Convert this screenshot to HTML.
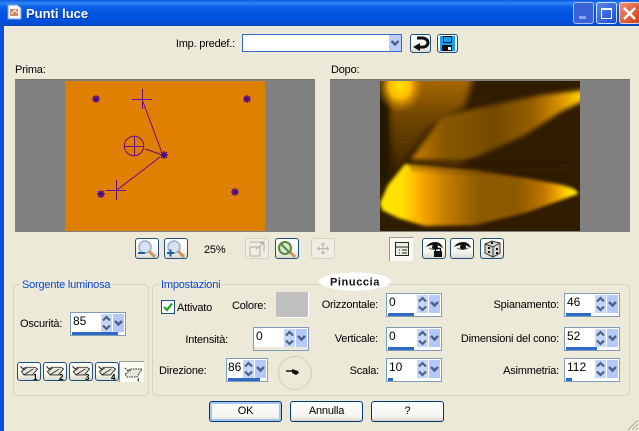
<!DOCTYPE html>
<html><head><meta charset="utf-8"><style>
html,body{margin:0;padding:0}
body{width:639px;height:431px;overflow:hidden;position:relative;background:#ece9d8;font:11px "Liberation Sans",sans-serif;letter-spacing:-.2px;color:#000}
.a,.t,.sp,.b,.ib,svg.a{position:absolute}
.t{white-space:nowrap;line-height:14px}
.r{text-align:right}
.g{position:absolute;border:1px solid #d6d3c4;border-radius:5px}
.gt{position:absolute;background:#ece9d8;color:#0a46d8;padding:0 2px;line-height:14px;white-space:nowrap;font-size:11px}
.sp{width:54px;height:22px;background:#fff;border:1px solid #7f9db9}
.sp span{position:absolute;left:2px;top:1px;font-size:12px;line-height:15px;letter-spacing:0}
.sp i{position:absolute;left:1px;bottom:0;height:3px;background:#316ac5}
.sp .tr{position:absolute;left:0;right:0;bottom:0;height:3px;background:#ece9d8}
.sp svg{position:absolute;right:1px;top:1px}
.ib{width:22px;height:19px;border:1px solid #1c5180;border-radius:3px;background:linear-gradient(#fff,#f4f2e8 70%,#dcd9cc)}
.ib.d{border-color:#d4d1c2;background:#f0eee2}
.ib svg{position:absolute;left:0;top:0}
.b{height:19px;border:1px solid #003c74;border-radius:3px;background:linear-gradient(#fff,#f4f3ee 80%,#d6d0c5);text-align:center;line-height:19px;font-size:11px}
</style></head><body>
<svg width="0" height="0" style="position:absolute"><defs>
<g id="ctl">
<rect x="0" y="0" width="11" height="9" fill="#c6d6f6"/>
<rect x="0" y="9" width="11" height="9" fill="#c6d6f6"/>
<rect x="12" y="0" width="11" height="18" fill="#b4c9f8"/>
<path d="M2 6.500 5.500 3 9 6.500M2 11.500 5.500 15 9 11.500" fill="none" stroke="#4d6185" stroke-width="2.200"/>
<path d="M14 7 17.500 10.500 21 7" fill="none" stroke="#4d6185" stroke-width="2.500"/>
</g>
<g id="mag"><circle cx="9" cy="8" r="6" fill="#d4e2f4" stroke="#9db0c4" stroke-width="1.500"/><path d="M13 12 19 18" stroke="#c8946a" stroke-width="3"/></g>
<g id="lt"><path d="M3 4 6 7 9 5H20L23 7 17 14H7L4 10 10 6" fill="#e6e6da" stroke="#222" stroke-width="1"/><path d="M3 4 7 8M7 14 18 7" stroke="#222" fill="none"/></g>
<g id="eye"><path d="M3 8Q6 3 12 3 18 3 20 9L18 8Q14 5 9 6 5 7 3 8Z" fill="#111"/><circle cx="12" cy="8" r="3" fill="#111"/><path d="M6 9Q11 12 17 9" fill="none" stroke="#555"/></g>
<g id="star"><circle r="2.800" fill="#4f0a8a"/><path d="M-4 0H4M0-4V4M-3-3 3 3M3-3-3 3" stroke="#4f0a8a" stroke-width="1.200"/></g>
</defs></svg>

<!-- title bar -->
<div class="a" style="left:0;top:0;width:639px;height:26px;background:linear-gradient(#0a5ae0 0,#2f86f5 3px,#0c5fe6 7px,#0054e0 14px,#0050dc 21px,#0a4cc8 25px,#003ca8 26px)"></div>
<svg class="a" style="left:6px;top:4px" width="17" height="17" viewBox="0 0 17 17"><path d="M2 1H11L15 4V15H2Z" fill="#f4f4fa" stroke="#8aa0c8"/><rect x="4" y="5" width="8" height="7" fill="#d08a60"/><path d="M5 10 9 6 11 9" stroke="#fff" fill="none"/></svg>
<div class="t" style="left:26px;top:5px;color:#fff;font-weight:bold;font-size:13px;line-height:17px;letter-spacing:0;text-shadow:1px 1px 0 #0a3aa0">Punti luce</div>
<div class="a" style="left:573px;top:2px;width:19px;height:20px;border:1px solid #a8c0f0;border-radius:3px;background:#3a62d6"><div class="a" style="left:5px;top:13px;width:7px;height:3px;background:#8fa8e8"></div></div>
<div class="a" style="left:596px;top:2px;width:19px;height:20px;border:1px solid #d0dcf8;border-radius:3px;background:linear-gradient(135deg,#5a86ee,#1c4cd0)"><div class="a" style="left:4px;top:5px;width:9px;height:8px;border:1px solid #fff;border-top-width:2px"></div></div>
<div class="a" style="left:619px;top:2px;width:19px;height:20px;border:1px solid #f0d8d0;border-radius:3px;background:linear-gradient(135deg,#ee9070,#d23c14)"><svg class="a" style="left:0;top:0" width="19" height="20"><path d="M4 5 15 16M15 5 4 16" stroke="#fff" stroke-width="2.400"/></svg></div>
<div class="a" style="left:0;top:26px;width:4px;height:405px;background:#0a4ee0"></div>

<!-- presets row -->
<div class="t r" style="left:150px;width:85px;top:37px;">Imp. predef.:</div>
<div class="a" style="left:242px;top:34px;width:158px;height:16px;background:#fff;border:1px solid #316ac5"></div>
<svg class="a" style="left:389px;top:35px" width="12" height="16"><rect width="12" height="16" fill="#b9cdf7"/><path d="M2.500 6 6 9.500 9.500 6" fill="none" stroke="#4d6185" stroke-width="2.400"/></svg>
<div class="ib" style="left:410px;top:34px;width:19px;height:17px"><svg width="19" height="17"><path d="M6 3H12Q17 4 17 8 16 13 9 12" fill="none" stroke="#111" stroke-width="3"/><path d="M2 12 9 8V16Z" fill="#111"/></svg></div>
<div class="ib" style="left:437px;top:34px;width:19px;height:17px"><svg width="19" height="17"><rect x="2" y="1" width="15" height="15" fill="#1aa0f0"/><rect x="5" y="1" width="9" height="7" fill="#111"/><rect x="6" y="2" width="7" height="5" fill="#1aa0f0"/><rect x="4" y="10" width="10" height="6" fill="#111"/><rect x="10" y="12" width="3" height="3" fill="#fff"/></svg></div>

<div class="t" style="left:15px;top:63px">Prima:</div>
<div class="t" style="left:331px;top:63px">Dopo:</div>

<!-- Prima -->
<div class="a" style="left:15px;top:80px;width:300px;height:152px;background:#808080;box-shadow:0 -1px 0 #77756a"></div>
<div class="a" style="left:65px;top:81px;width:200px;height:150px;background:#e08000"></div>
<svg class="a" style="left:65px;top:81px" width="200" height="150" viewBox="0 0 200 150">
<g fill="none" stroke="#6a0a8a" stroke-width="1">
<path d="M77.500 8V28M67 18.500H87M78 21 97 72"/>
<path d="M51.500 99V119M41 109.500H61M52 109 95 76"/>
<circle cx="69" cy="65" r="9.700"/><path d="M69.500 55V75M59 65.500H79M80 68 95 73"/>
</g>
<use href="#star" x="31" y="18"/><use href="#star" x="182" y="18"/><use href="#star" x="99" y="74"/><use href="#star" x="36" y="113"/><use href="#star" x="170" y="111"/>
</svg>

<!-- Dopo -->
<div class="a" style="left:330px;top:80px;width:300px;height:152px;background:#808080;box-shadow:0 -1px 0 #77756a"></div>
<svg class="a" style="left:380px;top:81px" width="200" height="150" viewBox="0 0 200 150">
<defs>
<filter id="b1" x="-10%" y="-20%" width="120%" height="140%"><feGaussianBlur stdDeviation="1.500"/></filter>
<filter id="b2" x="-30%" y="-30%" width="160%" height="160%"><feGaussianBlur stdDeviation="3.500"/></filter>
<filter id="b3" x="-20%" y="-30%" width="140%" height="160%"><feGaussianBlur stdDeviation="2.500"/></filter>
<linearGradient id="lg1" x1="0" x2="198" y1="0" y2="0" gradientUnits="userSpaceOnUse">
<stop offset="0" stop-color="#ffe800"/><stop offset=".12" stop-color="#ffdc00"/><stop offset=".2" stop-color="#ffac00"/><stop offset=".32" stop-color="#c88000"/><stop offset=".5" stop-color="#8e5a00"/><stop offset=".7" stop-color="#8e5a00"/><stop offset=".83" stop-color="#c07800"/><stop offset=".9" stop-color="#f0a800"/><stop offset=".94" stop-color="#ffd000"/><stop offset=".97" stop-color="#ffec00"/><stop offset="1" stop-color="#fff000"/>
</linearGradient>
<linearGradient id="lg2" x1="30" x2="200" y1="0" y2="0" gradientUnits="userSpaceOnUse">
<stop offset="0" stop-color="#c88000"/><stop offset=".2" stop-color="#8a5800"/><stop offset=".5" stop-color="#744a00"/><stop offset=".72" stop-color="#965e00"/><stop offset=".88" stop-color="#d89000"/><stop offset="1" stop-color="#ffd000"/>
</linearGradient>
<linearGradient id="lg3" x1="0" x2="0" y1="0" y2="90" gradientUnits="userSpaceOnUse">
<stop offset="0" stop-color="#a86800"/><stop offset=".4" stop-color="#704600"/><stop offset="1" stop-color="#402600"/>
</linearGradient>
<radialGradient id="rg1"><stop offset="0" stop-color="#ffe400"/><stop offset=".45" stop-color="#ffb800"/><stop offset="1" stop-color="#b87400" stop-opacity="0"/></radialGradient>
<linearGradient id="lg4" x1="0" x2="0" y1="78" y2="96" gradientUnits="userSpaceOnUse"><stop offset="0" stop-color="#301c00" stop-opacity=".6"/><stop offset="1" stop-color="#301c00" stop-opacity="0"/></linearGradient>
</defs>
<rect width="200" height="150" fill="#301c00"/>
<path d="M10 -10H95L85 25 48 48 16 92Q8 50 10 20Z" fill="url(#lg3)" filter="url(#b2)"/>
<rect x="0" y="0" width="8" height="100" fill="#1e1200" filter="url(#b3)" opacity=".8"/>
<path d="M30 80 60 38Q65 34 75 32 112 24 162 14L205 9V19L182 30 145 54 112 69 78 84Z" fill="url(#lg2)" filter="url(#b3)"/>
<path d="M0 122 8 104 25 83 32 83 95 89 145 97 182 104Q198 108 198 113L195 114 145 132 95 144 45 145 18 137 2 129Z" fill="url(#lg1)" filter="url(#b1)"/>
<path d="M26 78H190V108L95 96 32 90Z" fill="url(#lg4)" filter="url(#b1)"/>
<ellipse cx="20" cy="5" rx="24" ry="27" fill="url(#rg1)"/>
</svg>

<!-- zoom row -->
<div class="ib" style="left:135px;top:238px"><svg width="22" height="19"><use href="#mag"/><path d="M2 14H9" stroke="#1c5ca8" stroke-width="2"/></svg></div>
<div class="ib" style="left:164px;top:238px"><svg width="22" height="19"><use href="#mag"/><path d="M2 14H9M5.500 10.500V17.500" stroke="#1c5ca8" stroke-width="2"/></svg></div>
<div class="t" style="left:204px;top:243px">25%</div>
<div class="ib d" style="left:245px;top:238px"><svg width="22" height="19"><rect x="4" y="8" width="10" height="9" fill="none" stroke="#b0b0a8"/><path d="M4 3H18V13M10 10 18 4M14 4H18V8" fill="none" stroke="#b0b0a8"/></svg></div>
<div class="ib" style="left:275px;top:238px"><svg width="22" height="19"><path d="M13 12 19 18" stroke="#c8946a" stroke-width="3"/><circle cx="9" cy="9" r="6" fill="#d8e8d8" stroke="#5a8a3a" stroke-width="2"/><path d="M5 5 13 13" stroke="#5a8a3a" stroke-width="2"/></svg></div>
<div class="ib d" style="left:311px;top:238px"><svg width="22" height="19"><path d="M11 4V15M5.500 9.500H16.500M9 6 11 4 13 6M9 13 11 15 13 13M7.500 7.500 5.500 9.500 7.500 11.500M14.500 7.500 16.500 9.500 14.500 11.500" fill="none" stroke="#b8b8b0"/></svg></div>

<div class="a" style="left:389px;top:237px;width:23px;height:23px;background:#fafaf5;border-top:1px solid #9a9a8e;border-left:1px solid #9a9a8e"><svg class="a" style="left:5px;top:4px" width="15" height="15"><rect x=".5" y=".5" width="13" height="13" fill="#f0eee0" stroke="#222"/><path d="M1 5H13M4 8H5M7 8H12M4 11H5M7 11H12" stroke="#222"/></svg></div>
<div class="ib" style="left:422px;top:238px"><svg width="22" height="19"><use href="#eye"/><rect x="11" y="12" width="8" height="6" fill="#111"/><path d="M12.500 12V9.500H17.500V12" fill="none" stroke="#111" stroke-width="1.300"/></svg></div>
<div class="ib" style="left:450px;top:238px"><svg width="22" height="19"><use href="#eye"/></svg></div>
<div class="ib" style="left:480px;top:238px"><svg width="22" height="19"><path d="M4 5 11 2 19 4V14L12 18 4 14Z" fill="#d8d6cc" stroke="#333"/><path d="M4 5 12 8 19 4M12 8V18" fill="none" stroke="#333"/><path d="M7 9H9M7 13H9M15 10H17M15 14H17M10 4H12" stroke="#111" stroke-width="2"/></svg></div>

<!-- groups -->
<div class="g" style="left:13px;top:284px;width:134px;height:110px"></div>
<div class="gt" style="left:20px;top:278px">Sorgente luminosa</div>
<div class="g" style="left:152px;top:284px;width:476px;height:110px"></div>
<div class="gt" style="left:159px;top:278px">Impostazioni</div>
<svg class="a" style="left:319px;top:272px" width="72" height="19"><ellipse cx="36" cy="9.500" rx="36" ry="9" fill="#fff"/><text x="36" y="13.500" text-anchor="middle" font-family="Liberation Sans" font-weight="bold" font-size="11" letter-spacing=".6" fill="#111">Pinuccia</text></svg>

<!-- Sorgente -->
<div class="t" style="left:20px;top:317px">Oscurità:</div>
<div class="sp" style="left:70px;top:312px"><span>85</span><i style="width:46px"></i><svg width="23" height="18"><use href="#ctl"/></svg></div>
<div class="ib" style="left:17px;top:362px;width:22px;height:17px"><svg width="22" height="17"><use href="#lt" transform="scale(.85)"/><text x="15" y="17" font-size="8" font-weight="bold" font-family="Liberation Sans">1</text></svg></div>
<div class="ib" style="left:43px;top:362px;width:22px;height:17px"><svg width="22" height="17"><use href="#lt" transform="scale(.85)"/><text x="15" y="17" font-size="8" font-weight="bold" font-family="Liberation Sans">2</text></svg></div>
<div class="ib" style="left:69px;top:362px;width:22px;height:17px"><svg width="22" height="17"><use href="#lt" transform="scale(.85)"/><text x="15" y="17" font-size="8" font-weight="bold" font-family="Liberation Sans">3</text></svg></div>
<div class="ib" style="left:95px;top:362px;width:22px;height:17px"><svg width="22" height="17"><use href="#lt" transform="scale(.85)"/><text x="15" y="17" font-size="8" font-weight="bold" font-family="Liberation Sans">4</text></svg></div>
<div class="a" style="left:119px;top:361px;width:24px;height:20px;background:#fafaf5;border-top:1px solid #9a9a8e;border-left:1px solid #9a9a8e"><svg class="a" style="left:1px;top:2px" width="23" height="18"><path d="M4 4 7 7 9 5H21L16 13H6L4 10 10 6" fill="#e6e6da" stroke="#222" stroke-dasharray="1.500 1"/><text x="16" y="18" font-size="8" font-weight="bold" font-family="Liberation Sans">&#8249;</text></svg></div>

<!-- Impostazioni -->
<svg class="a" style="left:161px;top:300px" width="14" height="14"><rect x=".5" y=".5" width="13" height="13" fill="#fff" stroke="#1c5180"/><path d="M3 7 6 10 11 3.500" fill="none" stroke="#21a121" stroke-width="2.200"/></svg>
<div class="t" style="left:177px;top:301px">Attivato</div>
<div class="t" style="left:232px;top:299px">Colore:</div>
<div class="a" style="left:276px;top:292px;width:32px;height:25px;background:#c0c0c0;border-bottom:1px solid #fff;border-right:1px solid #fff"></div>
<div class="t r" style="left:170px;width:58px;top:333px">Intensità:</div>
<div class="sp" style="left:253px;top:327px"><span>0</span><div class="tr"></div><svg width="23" height="18"><use href="#ctl"/></svg></div>
<div class="t" style="left:159px;top:364px">Direzione:</div>
<div class="sp" style="left:226px;top:358px;width:40px"><span style="left:1px">86</span><i style="width:32px"></i><svg width="23" height="18"><use href="#ctl"/></svg></div>
<svg class="a" style="left:278px;top:356px" width="34" height="34"><circle cx="17" cy="17" r="16.500" fill="#ece9d8" stroke="#d0cdbc"/><path d="M8 15H16" stroke="#111" stroke-width="1.500"/><path d="M14 13 20 15 21 17 18 19 14 17Z" fill="#111"/></svg>

<div class="t r" style="left:315px;width:63px;top:298px">Orizzontale:</div>
<div class="sp" style="left:386px;top:293px"><span>0</span><i style="width:26px"></i><svg width="23" height="18"><use href="#ctl"/></svg></div>
<div class="t r" style="left:315px;width:63px;top:332px">Verticale:</div>
<div class="sp" style="left:386px;top:327px"><span>0</span><i style="width:26px"></i><svg width="23" height="18"><use href="#ctl"/></svg></div>
<div class="t r" style="left:315px;width:64px;top:364px">Scala:</div>
<div class="sp" style="left:386px;top:358px"><span>10</span><i style="width:5px"></i><svg width="23" height="18"><use href="#ctl"/></svg></div>

<div class="t r" style="left:450px;width:109px;top:298px">Spianamento:</div>
<div class="sp" style="left:564px;top:293px"><span>46</span><i style="width:25px"></i><svg width="23" height="18"><use href="#ctl"/></svg></div>
<div class="t r" style="left:440px;width:119px;top:332px">Dimensioni del cono:</div>
<div class="sp" style="left:564px;top:327px"><span>52</span><i style="width:31px"></i><svg width="23" height="18"><use href="#ctl"/></svg></div>
<div class="t r" style="left:450px;width:109px;top:364px">Asimmetria:</div>
<div class="sp" style="left:564px;top:358px"><span>112</span><i style="width:6px"></i><svg width="23" height="18"><use href="#ctl"/></svg></div>

<!-- bottom buttons -->
<div class="b" style="left:209px;top:401px;width:71px;box-shadow:inset 0 0 0 2px #a6c4ee">OK</div>
<div class="b" style="left:290px;top:401px;width:71px">Annulla</div>
<div class="b" style="left:371px;top:401px;width:71px">?</div>
<svg class="a" style="left:627px;top:419px" width="12" height="12"><path d="M1 11 11 1M5 11 11 5M9 11 11 9" stroke="#b0ada0"/></svg>
</body></html>
